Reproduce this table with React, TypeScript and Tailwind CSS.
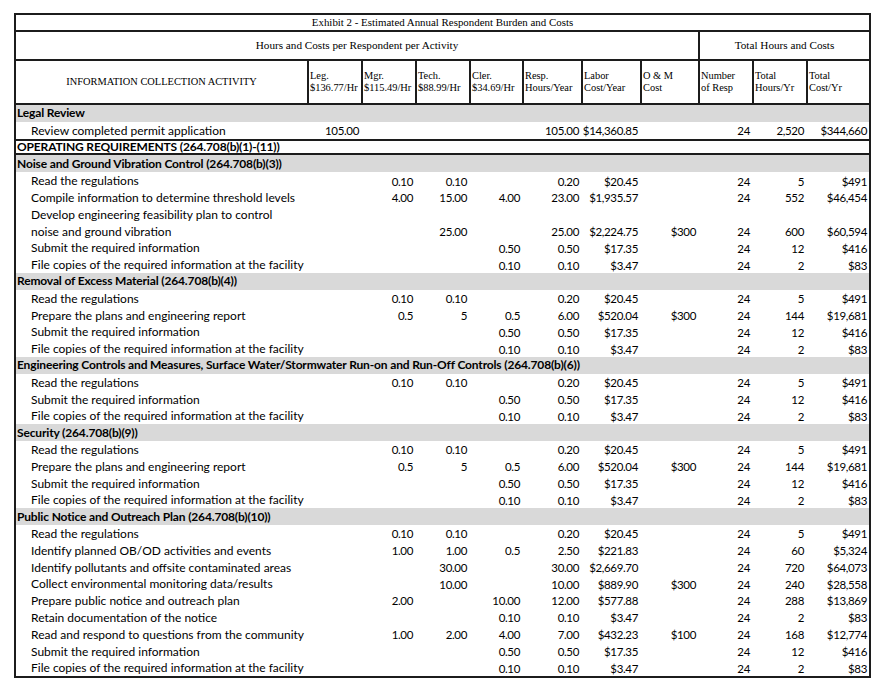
type Row =
  | { kind: 'section'; label: string }
  | { kind: 'group'; label: string }
  | { kind: 'item'; label: string; v: string[] };

// Leg, Mgr, Tech, Cler, Resp hrs, Labor cost, O&M, Number, Total hrs, Total cost
const rows: Row[] = [
  { kind: 'section', label: 'Legal Review' },
  { kind: 'item', label: 'Review completed permit application', v: ['105.00', '', '', '', '105.00', '$14,360.85', '', '24', '2,520', '$344,660'] },
  { kind: 'group', label: 'OPERATING REQUIREMENTS (264.708(b)(1)-(11))' },
  { kind: 'section', label: 'Noise and Ground Vibration Control (264.708(b)(3))' },
  { kind: 'item', label: 'Read the regulations', v: ['', '0.10', '0.10', '', '0.20', '$20.45', '', '24', '5', '$491'] },
  { kind: 'item', label: 'Compile information to determine threshold levels', v: ['', '4.00', '15.00', '4.00', '23.00', '$1,935.57', '', '24', '552', '$46,454'] },
  { kind: 'item', label: 'Develop engineering feasibility plan to control', v: ['', '', '', '', '', '', '', '', '', ''] },
  { kind: 'item', label: 'noise and ground vibration', v: ['', '', '25.00', '', '25.00', '$2,224.75', '$300', '24', '600', '$60,594'] },
  { kind: 'item', label: 'Submit the required information', v: ['', '', '', '0.50', '0.50', '$17.35', '', '24', '12', '$416'] },
  { kind: 'item', label: 'File copies of the required information at the facility', v: ['', '', '', '0.10', '0.10', '$3.47', '', '24', '2', '$83'] },
  { kind: 'section', label: 'Removal of Excess Material (264.708(b)(4))' },
  { kind: 'item', label: 'Read the regulations', v: ['', '0.10', '0.10', '', '0.20', '$20.45', '', '24', '5', '$491'] },
  { kind: 'item', label: 'Prepare the plans and engineering report', v: ['', '0.5', '5', '0.5', '6.00', '$520.04', '$300', '24', '144', '$19,681'] },
  { kind: 'item', label: 'Submit the required information', v: ['', '', '', '0.50', '0.50', '$17.35', '', '24', '12', '$416'] },
  { kind: 'item', label: 'File copies of the required information at the facility', v: ['', '', '', '0.10', '0.10', '$3.47', '', '24', '2', '$83'] },
  { kind: 'section', label: 'Engineering Controls and Measures, Surface Water/Stormwater Run-on and Run-Off Controls (264.708(b)(6))' },
  { kind: 'item', label: 'Read the regulations', v: ['', '0.10', '0.10', '', '0.20', '$20.45', '', '24', '5', '$491'] },
  { kind: 'item', label: 'Submit the required information', v: ['', '', '', '0.50', '0.50', '$17.35', '', '24', '12', '$416'] },
  { kind: 'item', label: 'File copies of the required information at the facility', v: ['', '', '', '0.10', '0.10', '$3.47', '', '24', '2', '$83'] },
  { kind: 'section', label: 'Security (264.708(b)(9))' },
  { kind: 'item', label: 'Read the regulations', v: ['', '0.10', '0.10', '', '0.20', '$20.45', '', '24', '5', '$491'] },
  { kind: 'item', label: 'Prepare the plans and engineering report', v: ['', '0.5', '5', '0.5', '6.00', '$520.04', '$300', '24', '144', '$19,681'] },
  { kind: 'item', label: 'Submit the required information', v: ['', '', '', '0.50', '0.50', '$17.35', '', '24', '12', '$416'] },
  { kind: 'item', label: 'File copies of the required information at the facility', v: ['', '', '', '0.10', '0.10', '$3.47', '', '24', '2', '$83'] },
  { kind: 'section', label: 'Public Notice and Outreach Plan (264.708(b)(10))' },
  { kind: 'item', label: 'Read the regulations', v: ['', '0.10', '0.10', '', '0.20', '$20.45', '', '24', '5', '$491'] },
  { kind: 'item', label: 'Identify planned OB/OD activities and events', v: ['', '1.00', '1.00', '0.5', '2.50', '$221.83', '', '24', '60', '$5,324'] },
  { kind: 'item', label: 'Identify pollutants and offsite contaminated areas', v: ['', '', '30.00', '', '30.00', '$2,669.70', '', '24', '720', '$64,073'] },
  { kind: 'item', label: 'Collect environmental monitoring data/results', v: ['', '', '10.00', '', '10.00', '$889.90', '$300', '24', '240', '$28,558'] },
  { kind: 'item', label: 'Prepare public notice and outreach plan', v: ['', '2.00', '', '10.00', '12.00', '$577.88', '', '24', '288', '$13,869'] },
  { kind: 'item', label: 'Retain documentation of the notice', v: ['', '', '', '0.10', '0.10', '$3.47', '', '24', '2', '$83'] },
  { kind: 'item', label: 'Read and respond to questions from the community', v: ['', '1.00', '2.00', '4.00', '7.00', '$432.23', '$100', '24', '168', '$12,774'] },
  { kind: 'item', label: 'Submit the required information', v: ['', '', '', '0.50', '0.50', '$17.35', '', '24', '12', '$416'] },
  { kind: 'item', label: 'File copies of the required information at the facility', v: ['', '', '', '0.10', '0.10', '$3.47', '', '24', '2', '$83'] },
];

const headCols = [
  ['Leg.', '$136.77/Hr'],
  ['Mgr.', '$115.49/Hr'],
  ['Tech.', '$88.99/Hr'],
  ['Cler.', '$34.69/Hr'],
  ['Resp.', 'Hours/Year'],
  ['Labor', 'Cost/Year'],
  ['O & M', 'Cost'],
  ['Number', 'of Resp'],
  ['Total', 'Hours/Yr'],
  ['Total', 'Cost/Yr'],
];

const grid = 'grid grid-cols-[291px_54px_54px_54px_53px_59px_59px_58px_54px_54px_63px]';

export default function App() {
  return (
    <div className="min-h-screen bg-white pt-[13px] pl-[14px] text-black">
      <div className="w-[857px] border-2 border-[#1c1c1c]">
        {/* header */}
        <div className="font-['Liberation_Serif',serif]">
          <div className="h-[17px] border-b-2 border-[#1c1c1c] flex items-center justify-center text-[10.9px] leading-none">
            Exhibit 2 - Estimated Annual Respondent Burden and Costs
          </div>
          <div className="flex h-[29px] border-b-2 border-[#1c1c1c] text-[11.2px]">
            <div className="w-[682px] flex items-center justify-center">Hours and Costs per Respondent per Activity</div>
            <div className="flex-1 border-l-2 border-[#1c1c1c] flex items-center justify-center">Total Hours and Costs</div>
          </div>
          <div className={`${grid} h-[44px] border-b-2 border-[#1c1c1c] text-[10.4px] leading-[12px]`}>
            <div className="flex items-center justify-center">INFORMATION COLLECTION ACTIVITY</div>
            {headCols.map((h, i) => (
              <div key={i} className="border-l-2 border-[#1c1c1c] pl-[1px] flex flex-col justify-center whitespace-nowrap">
                <span>{h[0]}</span>
                <span>{h[1]}</span>
              </div>
            ))}
          </div>
        </div>

        {/* body */}
        <div className="font-['Lato',sans-serif] text-[12px]">
          {rows.map((r, i) => {
            if (r.kind === 'section') {
              return (
                <div key={i} className="h-[16.8px] bg-[#d9d9d9] flex items-center pl-[1px] font-bold tracking-[-0.15px] whitespace-nowrap">
                  {r.label}
                </div>
              );
            }
            if (r.kind === 'group') {
              return (
                <div key={i} className="h-[16.8px] border-y-2 border-[#1c1c1c] flex items-center pl-[1px] font-bold tracking-[-0.15px] whitespace-nowrap">
                  {r.label}
                </div>
              );
            }
            return (
              <div key={i} className={`${grid} h-[16.8px]`}>
                <div className="pl-[15px] flex items-center whitespace-nowrap">{r.label}</div>
                {r.v.map((val, j) => (
                  <div key={j} className="pr-[2px] flex items-center justify-end whitespace-nowrap text-[11.5px] tracking-[-0.35px]">
                    {val}
                  </div>
                ))}
              </div>
            );
          })}
        </div>
      </div>
    </div>
  );
}
